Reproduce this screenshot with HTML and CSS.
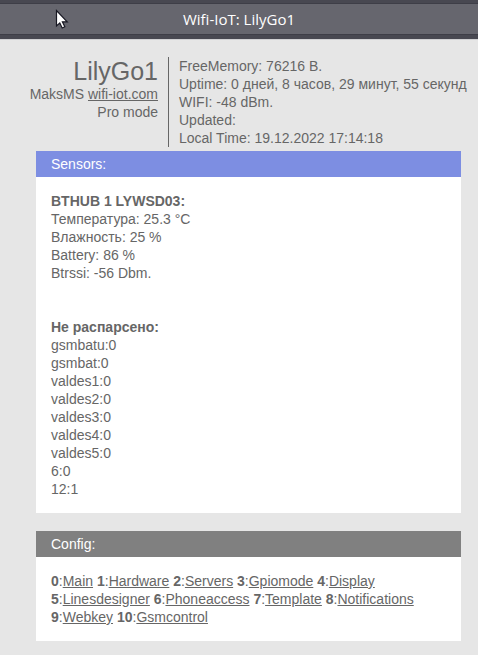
FILE: index.html
```
<!DOCTYPE html>
<html lang="ru">
<head>
<meta charset="utf-8">
<meta name="viewport" content="width=device-width, initial-scale=1">
<title>Wifi-IoT: LilyGo1</title>
<link rel="stylesheet" href="styles.css">
</head>
<body>
<header class="titlebar"><div class="titlebar-text">Wifi-IoT: LilyGo1</div></header>
<svg class="cursor" width="14" height="22" viewBox="0 0 14 22" aria-hidden="true">
  <path d="M1.5 1.5V17L4.8 14L7.2 19L9.8 17.8L7.4 12.8H12.2Z" fill="#fff" stroke="#171722" stroke-width="1.2"/>
</svg>
<main>
  <section class="summary">
    <div class="device">
      <h1 class="device-name">LilyGo1</h1>
      <div>MaksMS <a href="#">wifi-iot.com</a></div>
      <div>Pro mode</div>
    </div>
    <div class="status">
      <div>FreeMemory: 76216 B.</div>
      <div>Uptime: 0 дней, 8 часов, 29 минут, 55 секунд</div>
      <div>WIFI: -48 dBm.</div>
      <div>Updated:</div>
      <div>Local Time: 19.12.2022 17:14:18</div>
    </div>
  </section>
  <section class="panel">
    <h2 class="panel-title sensors-title">Sensors:</h2>
    <div class="panel-body readings">
      <div>
        <b>BTHUB 1 LYWSD03:</b>
        <div>Температура: 25.3 °C</div>
        <div>Влажность: 25 %</div>
        <div>Battery: 86 %</div>
        <div>Btrssi: -56 Dbm.</div>
      </div>
      <div>
        <b>Не распарсено:</b>
        <div>gsmbatu:0</div>
        <div>gsmbat:0</div>
        <div>valdes1:0</div>
        <div>valdes2:0</div>
        <div>valdes3:0</div>
        <div>valdes4:0</div>
        <div>valdes5:0</div>
        <div>6:0</div>
        <div>12:1</div>
      </div>
    </div>
  </section>
  <section class="panel">
    <h2 class="panel-title config-title">Config:</h2>
    <nav class="panel-body">
      <b>0</b>:<a href="#">Main</a>
      <b>1</b>:<a href="#">Hardware</a>
      <b>2</b>:<a href="#">Servers</a>
      <b>3</b>:<a href="#">Gpiomode</a>
      <b>4</b>:<a href="#">Display</a>
      <br>
      <b>5</b>:<a href="#">Linesdesigner</a>
      <b>6</b>:<a href="#">Phoneaccess</a>
      <b>7</b>:<a href="#">Template</a>
      <b>8</b>:<a href="#">Notifications</a>
      <br>
      <b>9</b>:<a href="#">Webkey</a>
      <b>10</b>:<a href="#">Gsmcontrol</a>
    </nav>
  </section>
</main>
</body>
</html>
```
FILE: styles.css
```
* { box-sizing: border-box; }
body {
  margin: 0;
  background: #e6e6e6;
  color: #666;
  font: 14px/18px "Liberation Sans", Arial, sans-serif;
}
a { color: inherit; text-decoration: underline; }
.titlebar {
  padding: 3px 0 4px;
  border-bottom: 1px solid #d0d0d2;
  background: #484851;
}
.titlebar-text {
  border-top: 1px solid #3e3e47;
  border-bottom: 1px solid #3e3e47;
  background: #66666e;
  color: #fff;
  font: 15px/30px "Open Sans", "Noto Sans", sans-serif;
  text-align: center;
}
.cursor { position: absolute; left: 55px; top: 9px; }
.summary {
  display: grid;
  grid-template-columns: 158px 1fr;
  gap: 10px;
  padding: 17px 0 4px;
}
.device { text-align: right; }
.device-name { margin: 0; font-size: 25px; line-height: 28px; font-weight: 400; }
.status { padding-left: 10px; border-left: 1px solid #666; }
.panel { margin: 0 17px 18px 36px; background: #fff; }
.panel:last-child { margin-bottom: 14px; }
.panel-title {
  margin: 0;
  padding: 4px 15px;
  color: #fff;
  font-size: 14px;
  line-height: 18px;
  font-weight: 400;
}
.sensors-title { background: #7d8ee2; }
.config-title { background: #808080; }
.panel-body { padding: 15px; }
.readings { display: grid; gap: 36px; }
```
